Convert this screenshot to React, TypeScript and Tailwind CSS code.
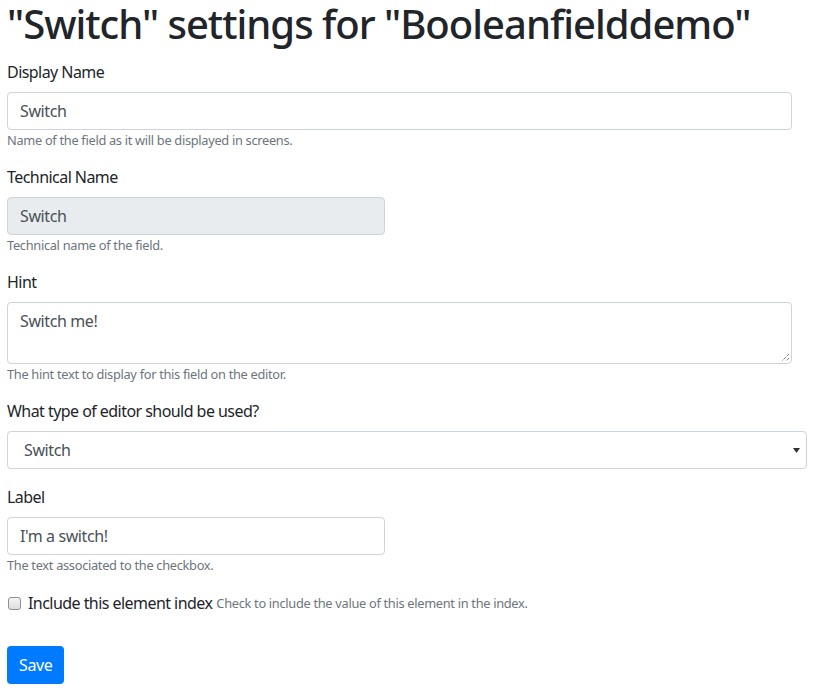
import React from "react";

function Label({ children, className = "" }: { children: React.ReactNode; className?: string }) {
  return <div className={`text-[16px] leading-6 tracking-[-0.55px] text-[#212529] ${className}`}>{children}</div>;
}

function Help({ children }: { children: React.ReactNode }) {
  return <div className="mt-[1px] text-[12.8px] leading-[19px] text-[#6c757d]">{children}</div>;
}

export default function App() {
  return (
    <div className="min-h-[694px] bg-white pl-[7px] font-['Noto_Sans',sans-serif] tracking-[-0.3px]">
      <h1 className="whitespace-nowrap text-[40px] leading-[48px] font-medium text-[#212529] tracking-[-1px]">
        "Switch" settings for "Booleanfielddemo"
      </h1>

      <Label className="mt-[12px]">Display Name</Label>
      <div className="mt-2 flex h-[38px] w-[785px] items-center rounded-[4px] border border-[#ced4da] bg-white px-3 text-[16px] tracking-[-0.4px] text-[#495057]">
        Switch
      </div>
      <Help>Name of the field as it will be displayed in screens.</Help>

      <Label className="mt-[15px]">Technical Name</Label>
      <div className="mt-2 flex h-[38px] w-[378px] items-center rounded-[4px] border border-[#ced4da] bg-[#e9ecef] px-3 text-[16px] tracking-[-0.4px] text-[#495057]">
        Switch
      </div>
      <Help>Technical name of the field.</Help>

      <Label className="mt-[15px]">Hint</Label>
      <div className="relative mt-2 h-[62px] w-[785px] rounded-[4px] border border-[#ced4da] bg-white px-3 py-[6px] text-[16px] leading-6 tracking-[-0.4px] text-[#495057]">
        Switch me!
        <svg className="absolute bottom-[1px] right-[1px]" width="10" height="10" viewBox="0 0 10 10">
          <path d="M9 2 L2 9 M9 6 L6 9" stroke="#444" strokeWidth="1" strokeDasharray="1 1" />
        </svg>
      </div>
      <Help>The hint text to display for this field on the editor.</Help>

      <Label className="mt-[15px]">What type of editor should be used?</Label>
      <div className="relative mt-2 flex h-[38px] w-[800px] items-center rounded-[4px] border border-[#ced4da] bg-white pl-4 text-[16px] tracking-[-0.4px] text-[#495057]">
        Switch
        <svg className="absolute right-[6px] top-[16px]" width="7" height="5" viewBox="0 0 7 5">
          <path d="M0 0 H7 L3.5 5 Z" fill="#333" />
        </svg>
      </div>

      <Label className="mt-4">Label</Label>
      <div className="mt-2 flex h-[38px] w-[378px] items-center rounded-[4px] border border-[#ced4da] bg-white px-3 text-[16px] tracking-[-0.4px] text-[#495057]">
        I'm a switch!
      </div>
      <Help>The text associated to the checkbox.</Help>

      <div className="mt-4 flex h-6 items-center">
        <div className="ml-[1px] h-[13px] w-[13px] rounded-[3px] border border-[#8f8f8f] bg-gradient-to-b from-[#f4f4f4] to-[#dedede]" />
        <span className="ml-[7px] text-[16px] leading-6 tracking-[-0.55px] text-[#212529]">Include this element index</span>
        <span className="ml-[4px] text-[12.8px] leading-6 text-[#6c757d]">
          Check to include the value of this element in the index.
        </span>
      </div>

      <button className="mt-[31px] flex h-[38px] items-center rounded-[4px] bg-[#007bff] px-3 text-[16px] tracking-[-0.4px] text-white">
        Save
      </button>
    </div>
  );
}
